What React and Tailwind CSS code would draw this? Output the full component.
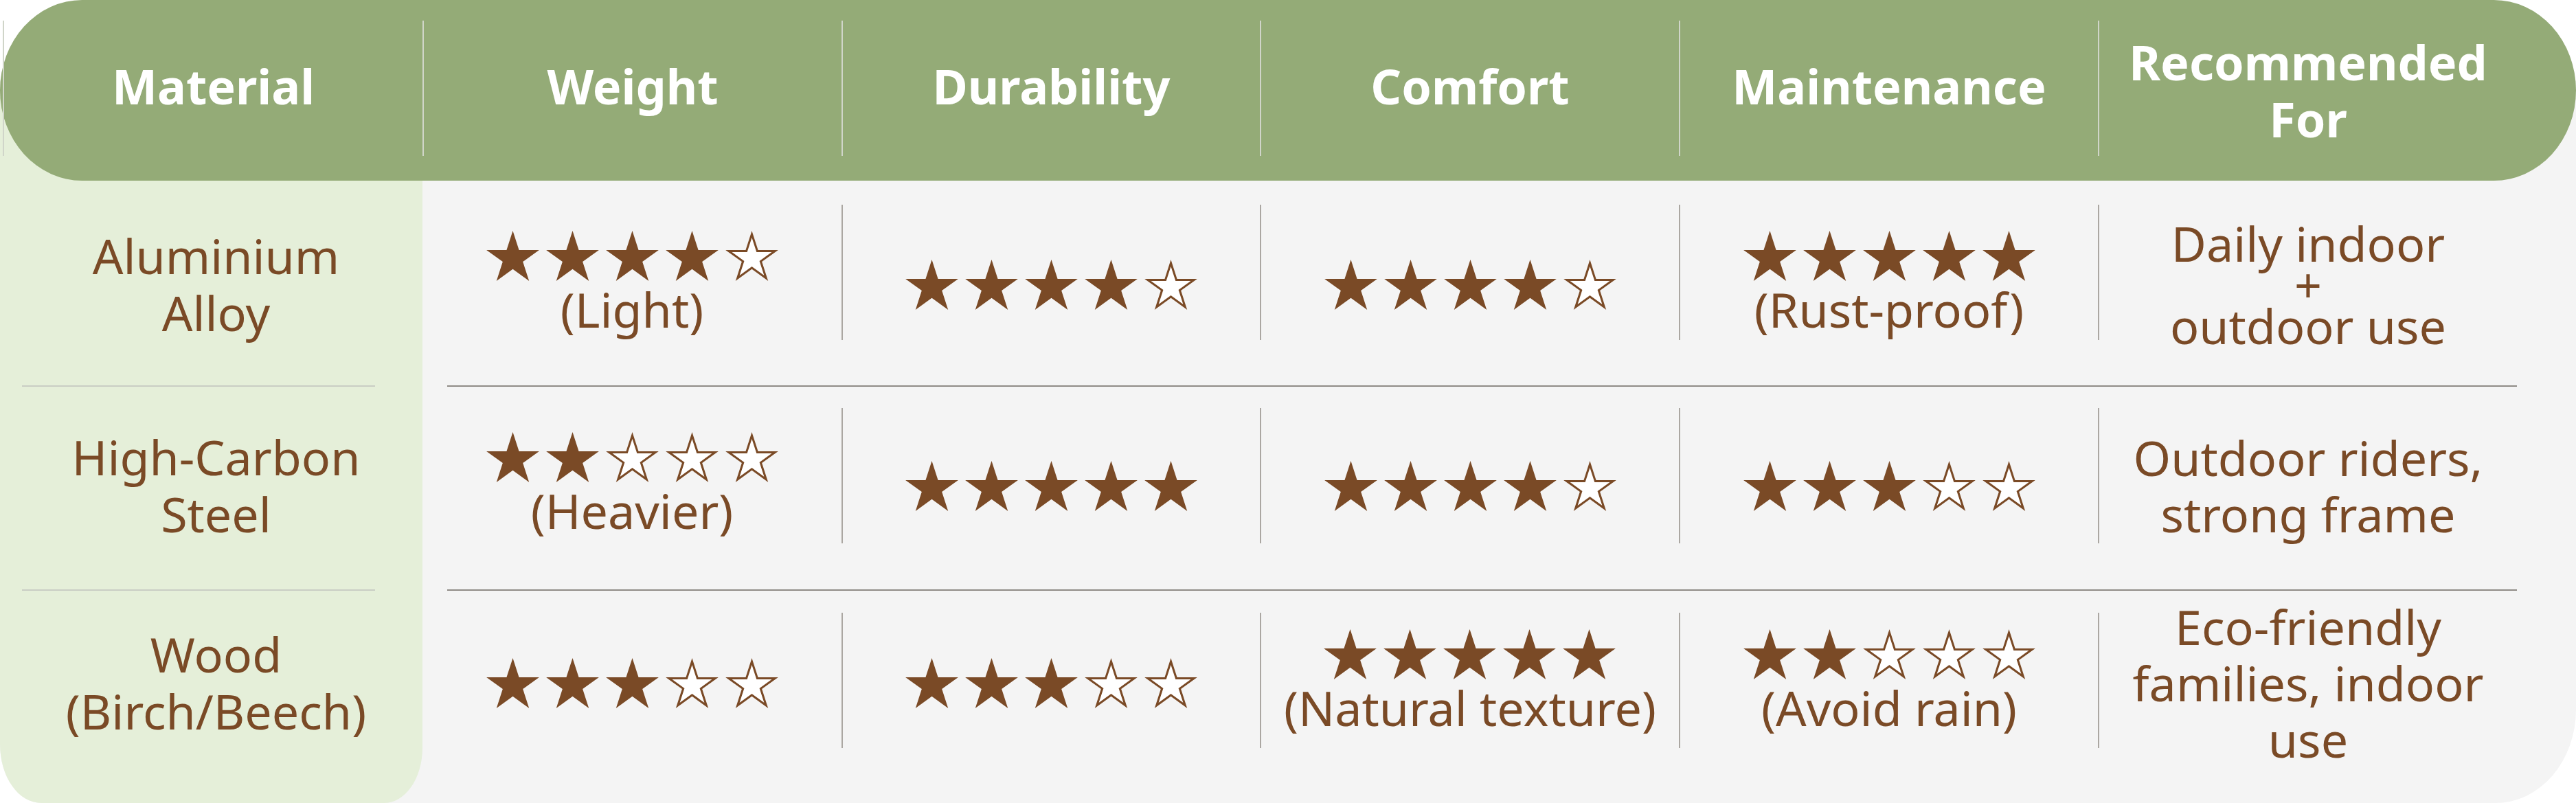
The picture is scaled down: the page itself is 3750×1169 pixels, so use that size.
import React from 'react';

const STAR = '50,0 61.8,36.32 100,36.32 69.1,58.78 80.9,95.1 50,72.65 19.1,95.1 30.9,58.78 0,36.32 38.2,36.32';

const Star = ({ filled }) => (
  <svg width="77" height="73" viewBox="0 0 100 95.1" className="block shrink-0">
    {filled ? (
      <polygon points={STAR} fill="#7a4a26" />
    ) : (
      <>
        <polygon points={STAR} fill="#ffffff" />
        <polygon points={STAR} fill="none" stroke="#7a4a26" strokeWidth="8" clipPath="url(#star-clip)" />
      </>
    )}
  </svg>
);

const Stars = ({ n }) => (
  <div className="flex gap-[10px]">
    {[0, 1, 2, 3, 4].map((i) => (
      <Star key={i} filled={i < n} />
    ))}
  </div>
);

const Rating = ({ n, note }) => (
  <div className="flex flex-col items-center">
    <Stars n={n} />
    {note && <div className="leading-[83px] whitespace-nowrap">{note}</div>}
  </div>
);

// lines joined with <br /> so a multi-line label stays one text block
const Lines = ({ lines, className }) => (
  <div className={`text-center whitespace-nowrap ${className}`}>
    {lines.map((t, i) => (
      <React.Fragment key={i}>
        {i > 0 && <br />}
        {t}
      </React.Fragment>
    ))}
  </div>
);

const headers = [
  { label: ['Material'], w: 'w-[611px]' },
  { label: ['Weight'], w: 'w-[610px]' },
  { label: ['Durability'], w: 'w-[609px]' },
  { label: ['Comfort'], w: 'w-[610px]' },
  { label: ['Maintenance'], w: 'w-[610px]' },
  { label: ['Recommended', 'For'], w: 'w-[610px]' },
];

const rows = [
  {
    material: ['Aluminium', 'Alloy'],
    cells: [{ n: 4, note: '(Light)' }, { n: 4 }, { n: 4 }, { n: 5, note: '(Rust-proof)' }],
    rec: ['Daily indoor', '+', 'outdoor use'],
    recLeading: 'leading-[60px]',
    h: 'h-[298px]',
    pad: 'pt-[4px]',
    divTop: 'mt-[35px]',
  },
  {
    material: ['High-Carbon', 'Steel'],
    cells: [{ n: 2, note: '(Heavier)' }, { n: 5 }, { n: 4 }, { n: 3 }],
    rec: ['Outdoor riders,', 'strong frame'],
    recLeading: 'leading-[82px]',
    h: 'h-[295px]',
    pad: 'pb-[7px]',
    divTop: 'mt-[31px]',
  },
  {
    material: ['Wood', '(Birch/Beech)'],
    cells: [{ n: 3 }, { n: 3 }, { n: 5, note: '(Natural texture)' }, { n: 2, note: '(Avoid rain)' }],
    rec: ['Eco-friendly', 'families, indoor', 'use'],
    recLeading: 'leading-[82px]',
    h: 'h-[309px]',
    pad: 'pb-[41px]',
    divTop: 'mt-[32px]',
    last: true,
  },
];

const cellWidths = ['w-[610px]', 'w-[609px]', 'w-[610px]', 'w-[610px]'];

const Divider = () => (
  <div className="flex h-[2px]">
    <div className="w-[615px] bg-[#e5efd9]">
      <div className="ml-[32px] w-[514px] h-[2px] bg-[#c9cdc4]" />
    </div>
    <div className="flex-1">
      <div className="ml-[36px] w-[3013px] h-[2px] bg-[#8f8b86]" />
    </div>
  </div>
);

export default function App() {
  return (
    <div className="w-[3750px] h-[1169px] bg-white font-['Noto_Sans','Open_Sans',sans-serif] text-[70px] text-[#7a4a26]">
      <svg width="0" height="0" className="absolute">
        <defs>
          <clipPath id="star-clip" clipPathUnits="userSpaceOnUse">
            <polygon points={STAR} />
          </clipPath>
        </defs>
      </svg>

      {/* header pill */}
      <div className="relative z-10 flex h-[263px] pl-[4px] rounded-[120px/132px] bg-[#94ab77] text-white font-bold">
        {headers.map((h, i) => (
          <div key={i} className={`flex shrink-0 ${h.w}`}>
            <div className="w-[2px] h-[197px] mt-[30px] shrink-0 bg-[#d0d5c9]" />
            <div className={`flex-1 flex items-center justify-center ${h.label.length === 1 ? 'pb-[12px]' : ''}`}>
              <Lines lines={h.label} className="leading-[83px]" />
            </div>
          </div>
        ))}
      </div>

      {/* body */}
      <div className="-mt-[131px] bg-[#f4f4f4] rounded-bl-[60px_85px] rounded-br-[117px_136px] overflow-hidden">
        <div className="flex h-[131px]">
          <div className="w-[615px] bg-[#e5efd9]" />
        </div>
        {rows.map((r, ri) => (
          <React.Fragment key={ri}>
            {ri > 0 && <Divider />}
            <div className={`flex ${r.h}`}>
              <div
                className={`w-[615px] shrink-0 flex items-center justify-center pl-[14px] bg-[#e5efd9] ${r.pad} ${r.last ? 'rounded-br-[56px_80px]' : ''}`}
              >
                <Lines lines={r.material} className="leading-[83px]" />
              </div>
              {r.cells.map((c, ci) => (
                <div key={ci} className={`flex shrink-0 ${cellWidths[ci]}`}>
                  {ci > 0 && <div className={`w-[2px] h-[197px] shrink-0 bg-[#aba7a2] ${r.divTop}`} />}
                  <div className={`flex-1 flex items-center justify-center ${r.pad}`}>
                    <Rating n={c.n} note={c.note} />
                  </div>
                </div>
              ))}
              <div className="flex shrink-0 w-[696px] pr-[86px]">
                <div className={`w-[2px] h-[197px] shrink-0 bg-[#aba7a2] ${r.divTop}`} />
                <div className={`flex-1 flex items-center justify-center ${r.pad}`}>
                  <Lines lines={r.rec} className={r.recLeading} />
                </div>
              </div>
            </div>
          </React.Fragment>
        ))}
      </div>
    </div>
  );
}
